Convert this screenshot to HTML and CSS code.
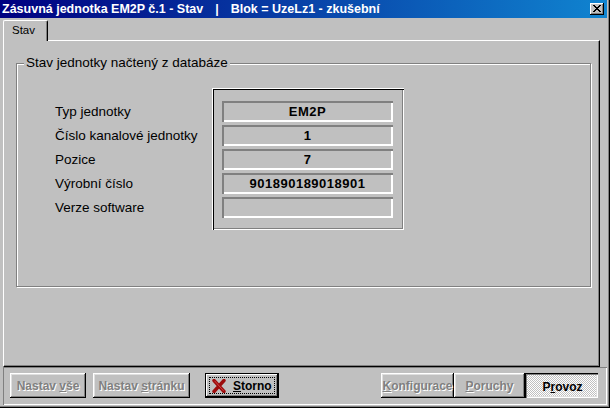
FILE: index.html
```html
<!DOCTYPE html>
<html lang="cs">
<head>
<meta charset="utf-8">
<title>Stav</title>
<link rel="stylesheet" href="styles.css">
</head>
<body>
<div class="window">
  <div class="titlebar">
    <span class="title">Zásuvná jednotka EM2P č.1 - Stav<span class="sep">|</span>Blok = UzeLz1 - zkušební</span>
    <span class="close"><svg width="8" height="7" viewBox="0 0 8 7" shape-rendering="crispEdges"><path fill="#000" d="M0 0h2v1h-2zM6 0h2v1h-2zM1 1h2v1h-2zM5 1h2v1h-2zM2 2h4v1h-4zM3 3h2v1h-2zM2 4h4v1h-4zM1 5h2v1h-2zM5 5h2v1h-2zM0 6h2v1h-2zM6 6h2v1h-2z"/></svg></span>
  </div>
  <div class="client">
    <div class="tabs"><div class="tab">Stav</div></div>
    <div class="tabpanel">
      <div class="group">
        <span class="legend">Stav jednotky načtený z databáze</span>
        <div class="labels">
          <div class="label">Typ jednotky</div>
          <div class="label">Číslo kanalové jednotky</div>
          <div class="label">Pozice</div>
          <div class="label">Výrobní číslo</div>
          <div class="label">Verze software</div>
        </div>
        <div class="datapanel">
          <div class="field">EM2P</div>
          <div class="field">1</div>
          <div class="field">7</div>
          <div class="field">901890189018901</div>
          <div class="field"></div>
        </div>
      </div>
    </div>
    <div class="bottombar">
      <div class="btngroup left">
        <button class="btn disabled w-vse">Nastav <u>v</u>še</button>
        <button class="btn disabled w-str">Nastav <u>s</u>tránku</button>
        <button class="btn default w-storno"><span class="focus"><svg class="xicon" width="14" height="14" viewBox="0 0 14 14"><path d="M2 1.5 L12 12.5 M12 1.5 L2 12.5" stroke="#9c0c0c" stroke-width="3.4" stroke-linecap="round" fill="none"/><path d="M2.5 1.8 L11.5 11.8" stroke="#d04040" stroke-width="1" fill="none"/></svg><span><u>S</u>torno</span></span></button>
      </div>
      <div class="btngroup right">
        <button class="btn disabled w-konf"><u>K</u>onfigurace</button>
        <button class="btn disabled w-por"><u>P</u>oruchy</button>
        <button class="btn checked w-prov">P<u>r</u>ovoz</button>
      </div>
    </div>
  </div>
</div>
</body>
</html>
```
FILE: styles.css
```css
html, body {
  margin: 0;
  padding: 0;
  background: #c0c0c0;
}
body {
  font-family: "Liberation Sans", Arial, sans-serif;
  color: #000;
}
.window {
  width: 610px;
  height: 408px;
  box-sizing: border-box;
  padding: 0 3px 3px 0;
  background: #c0c0c0;
  box-shadow: inset -1px -1px #000, inset -2px -2px #808080;
  display: flex;
  flex-direction: column;
}
.titlebar {
  height: 18px;
  flex: none;
  box-sizing: border-box;
  background: linear-gradient(to right, #000080, #1084d0);
  display: flex;
  align-items: center;
  justify-content: space-between;
  padding: 0 3px 0 2px;
  color: #fff;
  font-weight: bold;
  font-size: 12.5px;
  white-space: nowrap;
}
.sep {
  margin: 0 12px;
}
.close {
  width: 14px;
  height: 12px;
  box-sizing: border-box;
  background: #c0c0c0;
  box-shadow: inset -1px -1px #000, inset 1px 1px #fff, inset -2px -2px #808080;
  display: flex;
  align-items: center;
  justify-content: center;
  padding: 0 1px 1px 0;
}
.close svg { display: block; }
.client {
  flex: 1;
  display: flex;
  flex-direction: column;
  padding: 2px 0 0 3px;
}
.tabs {
  display: flex;
  height: 20px;
  position: relative;
  z-index: 1;
}
.tab {
  width: 45px;
  height: 21px;
  box-sizing: border-box;
  padding-left: 8px;
  font-size: 11.5px;
  line-height: 18px;
  background: #c0c0c0;
  border-top: 1px solid #fff;
  border-left: 1px solid #fff;
  border-right: 1px solid #000;
  border-radius: 2px 2px 0 0;
  box-shadow: inset -1px 0 #808080;
}
.tabpanel {
  width: 597px;
  height: 327px;
  box-sizing: border-box;
  border-top: 1px solid #fff;
  border-left: 1px solid #fff;
  border-right: 1px solid #000;
  border-bottom: 1px solid #000;
  box-shadow: inset -1px -1px #808080;
  padding: 22px 0 0 12px;
}
.group {
  position: relative;
  width: 575px;
  height: 224px;
  box-sizing: border-box;
  border: 1px solid #808080;
  box-shadow: inset 1px 1px #fff, 1px 1px #fff;
  padding: 24px 0 0 38px;
  display: flex;
  align-items: flex-start;
}
.legend {
  position: absolute;
  top: -9px;
  left: 7px;
  padding: 0 2px;
  background: #c0c0c0;
  font-size: 13.5px;
  line-height: 16px;
}
.labels {
  width: 157px;
  padding-top: 13px;
  display: flex;
  flex-direction: column;
  gap: 3px;
}
.label {
  height: 21px;
  line-height: 21px;
  font-size: 13.5px;
  white-space: nowrap;
}
.datapanel {
  width: 192px;
  height: 142px;
  box-sizing: border-box;
  padding: 13px 11px 12px 10px;
  display: flex;
  flex-direction: column;
  gap: 3px;
  box-shadow: inset 1px 1px #fff, inset 2px 2px #000, inset -1px -1px #fff, inset -2px -2px #808080;
}
.field {
  height: 21px;
  box-sizing: border-box;
  box-shadow: inset 2px 2px #808080, inset -2px -2px #fff;
  font-weight: bold;
  font-size: 13px;
  letter-spacing: 0.5px;
  text-align: center;
  line-height: 21px;
}
.bottombar {
  height: 38px;
  box-sizing: border-box;
  padding: 6px 9px 0 7px;
  display: flex;
  justify-content: space-between;
  align-items: flex-start;
  box-shadow: inset 1px 1px #808080, inset -1px -1px #fff;
}
.btngroup {
  display: flex;
}
.btngroup.left .w-str { margin-left: 7px; }
.btngroup.left .w-storno { margin-left: 15px; }
.btn {
  height: 25px;
  box-sizing: border-box;
  border: none;
  margin: 0;
  padding: 0;
  font-family: "Liberation Sans", Arial, sans-serif;
  font-weight: bold;
  font-size: 12px;
  color: #000;
  background: #c0c0c0;
  box-shadow: inset -1px -1px #000, inset 1px 1px #fff, inset -2px -2px #808080, inset 2px 2px #dfdfdf;
  white-space: nowrap;
}
.btn u { text-underline-offset: 1px; }
.disabled {
  color: #808080;
  text-shadow: 1px 1px #fff;
}
.default {
  box-shadow: inset 0 0 0 1px #000, inset -2px -2px #000, inset 2px 2px #fff, inset -3px -3px #808080;
  padding: 4px;
  display: flex;
}
.focus {
  flex: 1;
  border: 1px dotted #000;
  display: flex;
  align-items: center;
  padding-left: 2px;
  gap: 7px;
}
.xicon { display: block; }
.checked {
  background: repeating-conic-gradient(#fff 0 25%, #c0c0c0 0 50%) 0 0 / 2px 2px;
  box-shadow: inset 1px 1px #000, inset 2px 2px #808080, inset -1px -1px #fff, inset -2px -2px #dfdfdf;
  padding: 2px 0 0 2px;
}
.w-vse { width: 76px; }
.w-str { width: 97px; }
.w-storno { width: 74px; }
.w-konf { width: 73px; }
.w-por { width: 71px; }
.w-prov { width: 73px; }
```
